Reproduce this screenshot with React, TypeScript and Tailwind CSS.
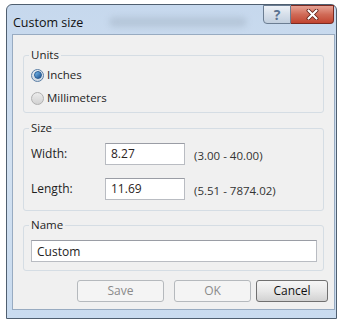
import { useState } from 'react';

const font = { fontFamily: '"Open Sans", "Noto Sans", sans-serif' };

function Radio({ checked, label }: { checked: boolean; label: string }) {
  return (
    <div className="flex items-center h-[16px] ml-[1px]">
      <span
        className={`flex items-center justify-center w-[13px] h-[13px] rounded-full border ${
          checked ? 'border-[#5b7fa6] bg-gradient-to-b from-[#e9eef3] to-[#cfd8e2]' : 'border-[#b0b0b0] bg-gradient-to-b from-[#ececec] to-[#d2d2d2]'
        }`}
      >
        {checked && (
          <span className="w-[8px] h-[8px] rounded-full bg-gradient-to-br from-[#7cc0f0] to-[#1b4f8f] border border-[#285c93]" />
        )}
      </span>
      <span className="ml-[3px] text-[11.5px] text-[#1e1e1e]">{label}</span>
    </div>
  );
}

function Group({ title, className, children }: { title: string; className: string; children: React.ReactNode }) {
  return (
    <fieldset className={`mx-[10px] border border-[#d5dde4] rounded-[3px] px-[6px] ${className}`}>
      <legend className="ml-[-1px] px-[2px] h-[16px] text-[11.5px] leading-[16px] text-[#1e1e1e]">{title}</legend>
      {children}
    </fieldset>
  );
}

function Field({ label, value, range, className }: { label: string; value: string; range: string; className: string }) {
  return (
    <div className={`flex items-center ${className}`}>
      <span className="w-[74px] ml-[1px] text-[12px] text-[#1e1e1e]">{label}</span>
      <div className="w-[80px] h-[22px] bg-white border border-[#b9bcc2] border-t-[#9a9da5] flex items-center pl-[5px] text-[12px] text-[#2a2222]">
        {value}
      </div>
      <span className="ml-[9px] mt-[3px] text-[11.5px] text-[#333]">{range}</span>
    </div>
  );
}

export default function App() {
  const [name, setName] = useState('Custom');

  return (
    <div className="w-[340px] h-[320px] bg-white pt-[4px] pl-[6px]" style={font}>
      <div className="w-[331px] h-[315px] border border-[#4f5f70] rounded-t-[6px] bg-gradient-to-b from-[#c6d8ed] via-[#d2e1f1] to-[#c9dbef] flex flex-col">
        {/* title bar */}
        <div className="h-[29px] flex items-start">
          <span className="ml-[6px] mt-[10px] text-[12.5px] leading-[16px] text-[#111]">Custom size</span>
          <div className="flex-1 h-[10px] mt-[12px] ml-[26px] mr-[16px] rounded-full bg-[#9aaabb] opacity-40 blur-[3px]" />
          <div className="flex mr-[2px]">
            <div className="w-[28px] h-[19px] border border-[#6b7d92] rounded-bl-[4px] bg-gradient-to-b from-[#eef2f7] via-[#d6dfea] to-[#c2cfde] flex items-center justify-center text-[14px] font-bold text-[#5a7391] leading-none">
              ?
            </div>
            <div className="w-[43px] h-[19px] border border-l-0 border-[#7a2a22] rounded-br-[4px] bg-gradient-to-b from-[#e6a294] via-[#d06a57] to-[#c1432f] flex items-center justify-center">
              <svg width="13" height="11" viewBox="0 0 13 11">
                <path d="M2.5 1.5 L10.5 9.5 M10.5 1.5 L2.5 9.5" stroke="#5a1a12" strokeWidth="3.8" strokeLinecap="round" />
                <path d="M2.5 1.5 L10.5 9.5 M10.5 1.5 L2.5 9.5" stroke="#fff" strokeWidth="2.2" strokeLinecap="round" />
              </svg>
            </div>
          </div>
        </div>

        {/* client area */}
        <div className="ml-[5px] mr-[1px] h-[276px] bg-[#f0f0f0] border border-[#98abc1]">
          <Group title="Units" className="mt-[12px] h-[66px]">
            <div className="mt-[4px]">
              <Radio checked label="Inches" />
            </div>
            <div className="mt-[7px]">
              <Radio checked={false} label="Millimeters" />
            </div>
          </Group>

          <Group title="Size" className="mt-[7px] h-[91px]">
            <Field label="Width:" value="8.27" range="(3.00 - 40.00)" className="mt-[7px]" />
            <Field label="Length:" value="11.69" range="(5.51 - 7874.02)" className="mt-[13px]" />
          </Group>

          <Group title="Name" className="mt-[6px] h-[54px]">
            <input
              value={name}
              onChange={(e) => setName(e.target.value)}
              className="mt-[7px] ml-[1px] w-[286px] h-[22px] bg-white border border-[#b9bcc2] border-t-[#9a9da5] pl-[5px] text-[12px] text-[#1e1e1e] outline-none"
            />
          </Group>

          <div className="flex mt-[9px] ml-[64px]">
            <button className="w-[87px] h-[22px] border border-[#b5b9bd] rounded-[3px] bg-[#f4f4f4] text-[12px] text-[#8a8a8a]">
              Save
            </button>
            <button className="ml-[10px] w-[77px] h-[22px] border border-[#b5b9bd] rounded-[3px] bg-[#f4f4f4] text-[12px] text-[#8a8a8a]">
              OK
            </button>
            <button className="ml-[5px] w-[72px] h-[22px] border border-[#707070] rounded-[3px] bg-gradient-to-b from-[#f6f6f6] via-[#e8e8e8] to-[#d2d2d2] text-[12px] text-[#111]">
              Cancel
            </button>
          </div>
        </div>
      </div>
    </div>
  );
}
